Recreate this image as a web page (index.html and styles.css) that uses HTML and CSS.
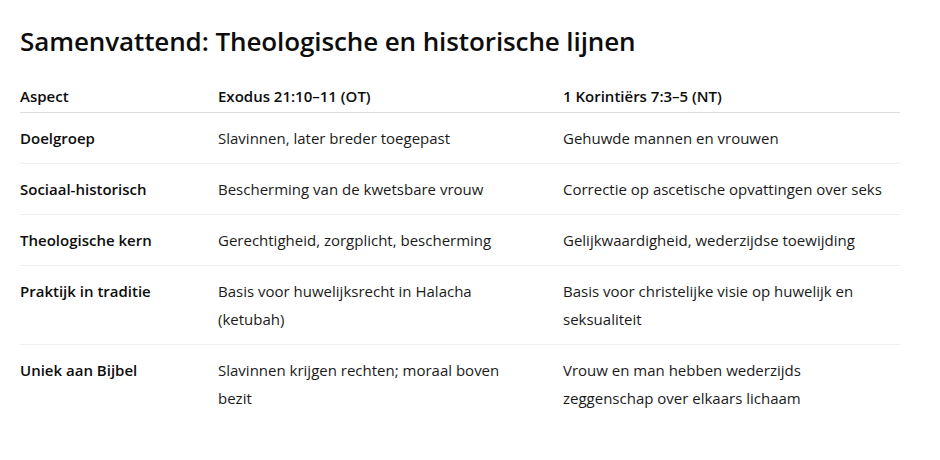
FILE: index.html
```html
<!DOCTYPE html>
<html lang="nl">
<head>
<meta charset="utf-8">
<title>Samenvattend</title>
<link rel="stylesheet" href="styles.css">
</head>
<body>
<main class="page">
  <h2 class="title">Samenvattend: Theologische en historische lijnen</h2>
  <table class="summary">
    <colgroup>
      <col class="c1"><col class="c2"><col class="c3">
    </colgroup>
    <thead>
      <tr><th>Aspect</th><th class="mid">Exodus 21:10–11 (OT)</th><th class="last">1 Korintiërs 7:3–5 (NT)</th></tr>
    </thead>
    <tbody>
      <tr><td class="key">Doelgroep</td><td class="mid">Slavinnen, later breder toegepast</td><td class="last">Gehuwde mannen en vrouwen</td></tr>
      <tr><td class="key">Sociaal-historisch</td><td class="mid">Bescherming van de kwetsbare vrouw</td><td class="last">Correctie op ascetische opvattingen over seks</td></tr>
      <tr><td class="key">Theologische kern</td><td class="mid">Gerechtigheid, zorgplicht, bescherming</td><td class="last">Gelijkwaardigheid, wederzijdse toewijding</td></tr>
      <tr><td class="key">Praktijk in traditie</td><td class="mid">Basis voor huwelijksrecht in Halacha (ketubah)</td><td class="last">Basis voor christelijke visie op huwelijk en seksualiteit</td></tr>
      <tr><td class="key">Uniek aan Bijbel</td><td class="mid">Slavinnen krijgen rechten; moraal boven bezit</td><td class="last">Vrouw en man hebben wederzijds zeggenschap over elkaars lichaam</td></tr>
    </tbody>
  </table>
</main>
</body>
</html>
```

FILE: styles.css
```css
html, body {
  margin: 0;
  padding: 0;
  background: #ffffff;
}
body {
  font-family: "Open Sans", "Noto Sans", "DejaVu Sans", sans-serif;
  color: #1a1a1a;
}
.page {
  padding: 24px 40px 0 20px;
}
.title {
  margin: 0 0 24px 0;
  font-size: 26px;
  line-height: 34px;
  font-weight: 600;
  color: #0d0d0d;
  letter-spacing: -0.1px;
}
.summary {
  width: 880px;
  border-collapse: collapse;
  table-layout: fixed;
  font-size: 15px;
  line-height: 28px;
}
.c1 { width: 198px; }
.c2 { width: 345px; }
.c3 { width: 337px; }
.summary th {
  text-align: left;
  font-weight: 600;
  color: #0d0d0d;
  padding: 0 16px 2px 0;
  vertical-align: top;
  border-bottom: 1px solid #dcdcdc;
}
.summary td {
  padding: 11px 16px 11px 0;
  vertical-align: top;
  border-bottom: 1px solid #efefef;
}
.summary .mid { padding-right: 32px; }
.summary .last { padding-right: 8px; }
.summary tbody tr:last-child td {
  border-bottom: none;
}
.summary td.key {
  font-weight: 600;
  color: #0d0d0d;
}
```
